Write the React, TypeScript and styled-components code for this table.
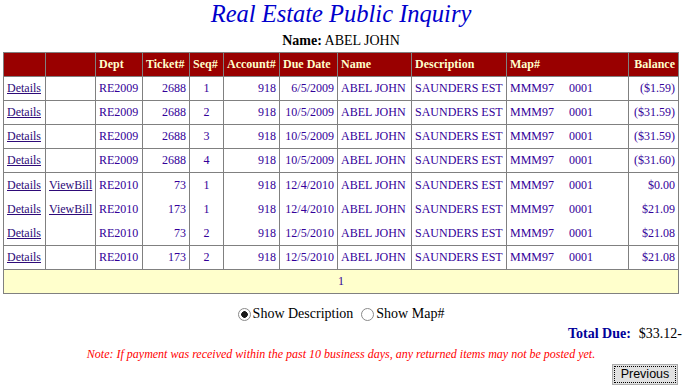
import styled, { createGlobalStyle } from 'styled-components';

interface BillRow {
  viewBill: boolean;
  dept: string;
  ticket: number;
  seq: number;
  account: number;
  dueDate: string;
  name: string;
  description: string;
  map: string;
  balance: string;
  open?: boolean;
}

type Align = 'left' | 'right' | 'center';

interface AlignProps {
  $align?: Align;
}
interface CellProps extends AlignProps {
  $open?: boolean;
}

const rows: BillRow[] = [
  { viewBill: false, dept: 'RE2009', ticket: 2688, seq: 1, account: 918, dueDate: '6/5/2009', name: 'ABEL JOHN', description: 'SAUNDERS EST', map: 'MMM97', balance: '($1.59)' },
  { viewBill: false, dept: 'RE2009', ticket: 2688, seq: 2, account: 918, dueDate: '10/5/2009', name: 'ABEL JOHN', description: 'SAUNDERS EST', map: 'MMM97', balance: '($31.59)' },
  { viewBill: false, dept: 'RE2009', ticket: 2688, seq: 3, account: 918, dueDate: '10/5/2009', name: 'ABEL JOHN', description: 'SAUNDERS EST', map: 'MMM97', balance: '($31.59)' },
  { viewBill: false, dept: 'RE2009', ticket: 2688, seq: 4, account: 918, dueDate: '10/5/2009', name: 'ABEL JOHN', description: 'SAUNDERS EST', map: 'MMM97', balance: '($31.60)' },
  { viewBill: true, dept: 'RE2010', ticket: 73, seq: 1, account: 918, dueDate: '12/4/2010', name: 'ABEL JOHN', description: 'SAUNDERS EST', map: 'MMM97', balance: '$0.00', open: true },
  { viewBill: true, dept: 'RE2010', ticket: 173, seq: 1, account: 918, dueDate: '12/4/2010', name: 'ABEL JOHN', description: 'SAUNDERS EST', map: 'MMM97', balance: '$21.09', open: true },
  { viewBill: false, dept: 'RE2010', ticket: 73, seq: 2, account: 918, dueDate: '12/5/2010', name: 'ABEL JOHN', description: 'SAUNDERS EST', map: 'MMM97', balance: '$21.08' },
  { viewBill: false, dept: 'RE2010', ticket: 173, seq: 2, account: 918, dueDate: '12/5/2010', name: 'ABEL JOHN', description: 'SAUNDERS EST', map: 'MMM97', balance: '$21.08' },
];

const columns: { label: string; width: number; align: Align }[] = [
  { label: '', width: 42, align: 'left' },
  { label: '', width: 50, align: 'left' },
  { label: 'Dept', width: 47, align: 'left' },
  { label: 'Ticket#', width: 47, align: 'left' },
  { label: 'Seq#', width: 34, align: 'left' },
  { label: 'Account#', width: 56, align: 'left' },
  { label: 'Due Date', width: 58, align: 'left' },
  { label: 'Name', width: 74, align: 'left' },
  { label: 'Description', width: 95, align: 'left' },
  { label: 'Map#', width: 122, align: 'left' },
  { label: 'Balance', width: 50, align: 'right' },
];

const App = () => {
  return (
    <>
      <GlobalStyle />
      <Page>
        <Title>Real Estate Public Inquiry</Title>
        <NameLine>
          <b>Name:</b> ABEL JOHN
        </NameLine>
        <BillTable>
          <colgroup>
            {columns.map((c, i) => (
              <col key={i} style={{ width: c.width }} />
            ))}
          </colgroup>
          <thead>
            <tr>
              {columns.map((c, i) => (
                <HeadCell key={i} $align={c.align}>
                  {c.label}
                </HeadCell>
              ))}
            </tr>
          </thead>
          <tbody>
            {rows.map((r, i) => (
              <tr key={i}>
                <Cell $open={r.open}>
                  <LinkText href="#">Details</LinkText>
                </Cell>
                <Cell $open={r.open}>
                  {r.viewBill && <LinkText href="#">ViewBill</LinkText>}
                </Cell>
                <Cell $open={r.open}>{r.dept}</Cell>
                <Cell $open={r.open} $align="right">{r.ticket}</Cell>
                <Cell $open={r.open} $align="center">{r.seq}</Cell>
                <Cell $open={r.open} $align="right">{r.account}</Cell>
                <Cell $open={r.open} $align="right">{r.dueDate}</Cell>
                <Cell $open={r.open}>{r.name}</Cell>
                <Cell $open={r.open}>{r.description}</Cell>
                <Cell $open={r.open}>
                  <MapText>{r.map}{'     '}0001</MapText>
                </Cell>
                <Cell $open={r.open} $align="right">{r.balance}</Cell>
              </tr>
            ))}
            <tr>
              <PagerCell colSpan={11}>1</PagerCell>
            </tr>
          </tbody>
        </BillTable>
        <RadioRow>
          <RadioLabel>
            <Radio type="radio" name="show" defaultChecked />
            Show Description
          </RadioLabel>
          <RadioLabel>
            <Radio type="radio" name="show" />
            Show Map#
          </RadioLabel>
        </RadioRow>
        <TotalRow>
          <TotalLabel>Total Due:</TotalLabel>
          <span>$33.12-</span>
        </TotalRow>
        <Note>
          Note: If payment was received within the past 10 business days, any returned items may not be
          posted yet.
        </Note>
        <ButtonRow>
          <PrevButton type="button">
            <span>Previous</span>
          </PrevButton>
        </ButtonRow>
      </Page>
    </>
  );
};

const GlobalStyle = createGlobalStyle`
  body {
    margin: 0;
    background: #ffffff;
    font-family: 'Liberation Serif', 'Times New Roman', serif;
    color: #000000;
  }
`;
const Page = styled.div`
  width: 676px;
  margin-left: 3px;
  display: flex;
  flex-direction: column;
`;
const Title = styled.h1`
  margin: 0;
  height: 28px;
  line-height: 28px;
  text-align: center;
  font-size: 24.5px;
  font-style: italic;
  font-weight: normal;
  color: #0000cc;
`;
const NameLine = styled.div`
  margin-top: 5px;
  line-height: 16px;
  font-size: 14px;
  text-align: center;
`;
const BillTable = styled.table`
  margin-top: 3px;
  width: 676px;
  table-layout: fixed;
  border-collapse: separate;
  border-spacing: 0;
  border-top: 1px solid #808080;
  border-left: 1px solid #808080;
  font-size: 12px;
  color: #330099;
`;
const HeadCell = styled.th<AlignProps>`
  height: 24px;
  padding: 0 3px;
  box-sizing: border-box;
  background: #990000;
  color: #ffffcc;
  font-weight: bold;
  white-space: nowrap;
  overflow: hidden;
  text-align: ${({ $align }) => $align || 'left'};
  border-right: 1px solid #808080;
  border-bottom: 1px solid #808080;
`;
const Cell = styled.td<CellProps>`
  height: ${({ $open }) => ($open ? '24.5px' : '24px')};
  padding: 0 3px;
  box-sizing: border-box;
  white-space: nowrap;
  overflow: hidden;
  text-align: ${({ $align }) => $align || 'left'};
  border-right: 1px solid #808080;
  border-bottom: ${({ $open }) => ($open ? 'none' : '1px solid #808080')};
`;
const PagerCell = styled.td`
  height: 24px;
  box-sizing: border-box;
  background: #ffffcc;
  text-align: center;
  border-right: 1px solid #808080;
  border-bottom: 1px solid #808080;
`;
const LinkText = styled.a`
  color: #2e0a78;
  text-decoration: underline;
`;
const MapText = styled.span`
  white-space: pre;
`;
const RadioRow = styled.div`
  margin-top: 12px;
  height: 16px;
  display: flex;
  justify-content: center;
  align-items: center;
  gap: 8px;
  font-size: 14px;
  line-height: 16px;
`;
const RadioLabel = styled.label`
  display: flex;
  align-items: center;
`;
const Radio = styled.input`
  appearance: none;
  width: 13px;
  height: 13px;
  margin: 0 2px 0 0;
  border: 1px solid #8a8a8a;
  border-radius: 50%;
  background: #ffffff;
  box-sizing: border-box;
  &:checked {
    background: radial-gradient(circle, #1a1a1a 0 3px, #ffffff 3.6px);
  }
`;
const TotalRow = styled.div`
  margin-top: 4px;
  margin-right: -3px;
  display: flex;
  justify-content: flex-end;
  gap: 8px;
  font-size: 14px;
  line-height: 16px;
`;
const TotalLabel = styled.span`
  font-weight: bold;
  color: #000099;
`;
const Note = styled.div`
  margin-top: 5px;
  text-align: center;
  font-size: 12px;
  line-height: 14px;
  font-style: italic;
  color: #ff0000;
`;
const ButtonRow = styled.div`
  margin-top: 3px;
  display: flex;
  justify-content: flex-end;
  padding-right: 1px;
`;
const PrevButton = styled.button`
  width: 66px;
  height: 21px;
  padding: 2px;
  border: 1px solid #adadad;
  background: #e1e1e1;
  font-family: 'Liberation Sans', Arial, sans-serif;
  font-size: 12.5px;
  color: #000000;
  box-sizing: border-box;
  span {
    display: block;
    height: 100%;
    line-height: 14px;
    outline: 1px dotted #000000;
  }
`;

export default App;
